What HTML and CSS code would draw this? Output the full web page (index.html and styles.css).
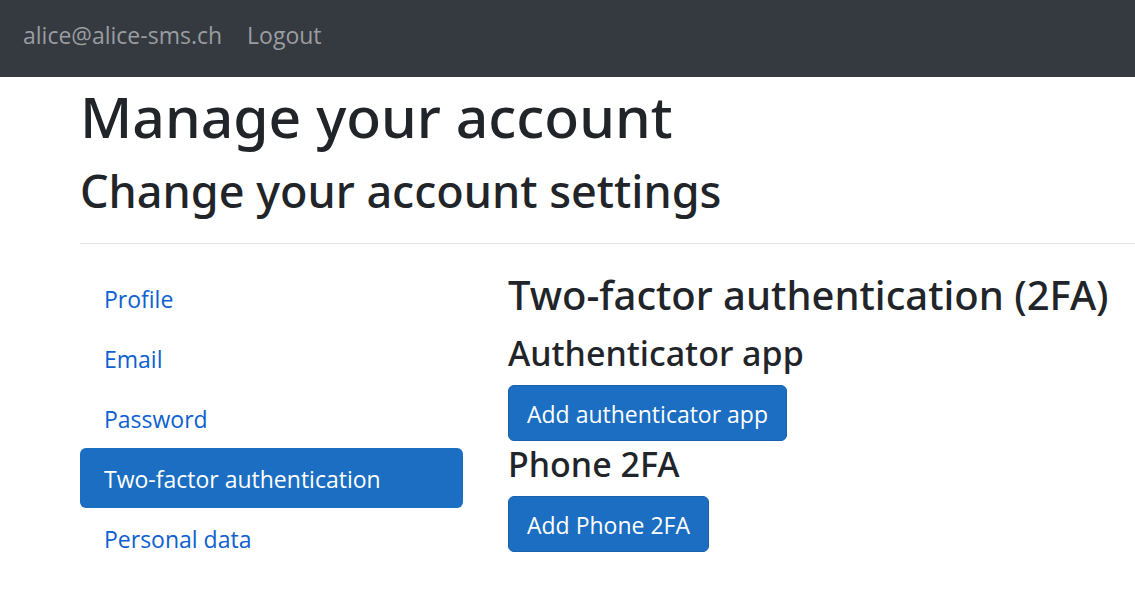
FILE: index.html
```html
<!DOCTYPE html>
<html lang="en">
<head>
<meta charset="utf-8">
<title>Two-factor authentication (2FA)</title>
<link rel="stylesheet" href="styles.css">
</head>
<body>
<header class="navbar">
  <nav class="navbar-links">
    <a class="navbar-link" href="#">alice@alice-sms.ch</a>
    <a class="navbar-link" href="#">Logout</a>
  </nav>
</header>
<main class="container">
  <h1 class="title">Manage your account</h1>
  <h2 class="subtitle">Change your account settings</h2>
  <hr class="divider">
  <div class="row">
    <nav class="side-nav">
      <a class="side-link" href="#">Profile</a>
      <a class="side-link" href="#">Email</a>
      <a class="side-link" href="#">Password</a>
      <a class="side-link active" href="#">Two-factor authentication</a>
      <a class="side-link" href="#">Personal data</a>
    </nav>
    <section class="content">
      <h3 class="section-title">Two-factor authentication (2FA)</h3>
      <h4 class="group-title">Authenticator app</h4>
      <a class="btn" href="#">Add authenticator app</a>
      <h4 class="group-title">Phone 2FA</h4>
      <a class="btn" href="#">Add Phone 2FA</a>
    </section>
  </div>
</main>
</body>
</html>
```
FILE: styles.css
```css
* {
  box-sizing: border-box;
}

body {
  margin: 0;
  background: #fff;
  color: #212529;
  font-family: "Segoe UI", "Open Sans", "Noto Sans", sans-serif;
  font-size: 23px;
  line-height: 36px;
}

a {
  color: #0d60d0;
  text-decoration: none;
}

.navbar {
  background: #343a40;
  padding: 17px 23px 24px;
}

.navbar-links {
  display: flex;
  gap: 25px;
}

.navbar-link {
  color: #9a9da0;
}

.container {
  padding: 8px 0 0 80px;
}

h1, h2, h3, h4 {
  margin: 0;
  font-family: "Segoe UI", "Noto Sans", "Open Sans", sans-serif;
  font-weight: 500;
  white-space: nowrap;
}

.title {
  font-size: 57px;
  line-height: 62px;
  padding-bottom: 16px;
}

.subtitle {
  font-size: 45px;
  line-height: 56px;
}

.divider {
  margin: 24px 0;
  border: 0;
  border-top: 1px solid #e5e5e5;
}

.row {
  display: grid;
  grid-template-columns: 383px 1fr;
  column-gap: 45px;
}

.side-nav {
  display: flex;
  flex-direction: column;
}

.side-link {
  padding: 13px 24px 11px;
  border-radius: 6px;
}

.side-link.active {
  background: #1b6ec2;
  color: #fff;
}

.section-title {
  font-size: 40px;
  line-height: 54px;
  padding-bottom: 10px;
}

.group-title {
  font-size: 34px;
  line-height: 43px;
  padding-bottom: 10px;
}

.group-title:not(:first-of-type) {
  padding-top: 2px;
}

.btn {
  display: block;
  width: fit-content;
  padding: 10px 18px 8px;
  border: 1px solid #1861ac;
  border-radius: 6px;
  background: #1b6ec2;
  color: #fff;
}
```
